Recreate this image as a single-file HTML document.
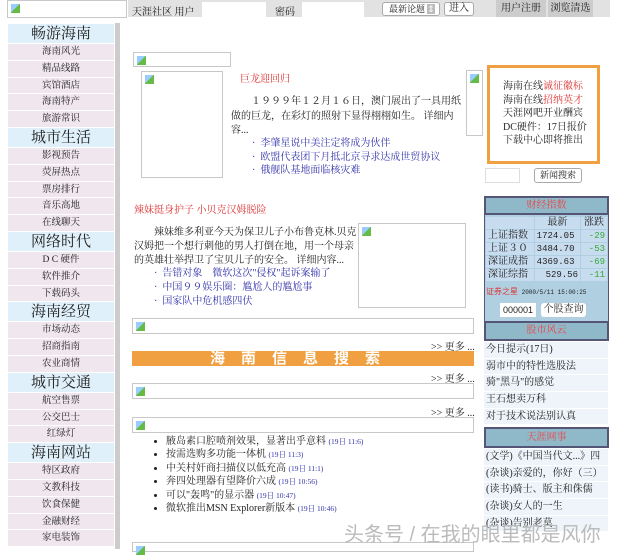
<!DOCTYPE html>
<html><head><meta charset="utf-8"><style>
*{margin:0;padding:0;box-sizing:border-box}
body{width:620px;height:549px;overflow:hidden;background:#fff;font-family:"Liberation Serif","Noto Serif CJK SC",serif;font-size:10px;color:#222;position:relative}
.a{position:absolute;white-space:nowrap}
.img{position:absolute;border:1px solid #c8c8c8;background:#fff}
.img:before{content:"";position:absolute;left:3px;top:3px;width:9px;height:9px;background:linear-gradient(135deg,#9cf 0 45%,#6b4 50%)}
.side{position:absolute;left:8px;top:24px;width:106px}
.side div{text-align:center;border-bottom:1px solid #fff}
.h{background:#dff0fa;font-size:15px;height:20px;line-height:20px}
.i{background:#efe6ee;font-size:9.5px;height:16.8px;line-height:16.8px}
.blue{color:#33a}
.red{color:#d33}
.rt div{height:16.7px;line-height:16.7px;background:#eef4fa;border-bottom:1px solid #fff;padding-left:2px;font-size:10px;white-space:nowrap;overflow:hidden}
.tb{border:2px solid #557;background:#8fb8c8;color:#e44;text-align:center;font-size:10px}
td{height:12px;line-height:12px;padding:0 2px;white-space:nowrap;background:#c8dcf0}
.m{font-family:'Liberation Mono',monospace;font-size:9px}
.g{color:#3a3;text-align:right}
</style></head><body>
<div class="img" style="left:7px;top:0;width:120px;height:18px"></div>
<div class="a" style="left:128px;top:0;width:482px;height:17px;background:#e2e2e2"></div>
<div class="a" style="left:132px;top:3px">天涯社区 用户</div>
<div class="a" style="left:202px;top:2px;width:64px;height:15px;background:#fff"></div>
<div class="a" style="left:275px;top:3px">密码</div>
<div class="a" style="left:302px;top:2px;width:62px;height:15px;background:#fff"></div>
<div class="a" style="left:382px;top:2px;width:58px;height:14px;background:#fff;border:1px solid #aaa;border-radius:3px;font-size:9px;padding-left:6px;line-height:12px">最新论题 <span style="background:#bbb;color:#fff">⇕</span></div>
<div class="a" style="left:444px;top:2px;width:30px;height:14px;background:#fff;border:1px solid #aaa;border-radius:3px;text-align:center;line-height:12px">进入</div>
<div class="a" style="left:496px;top:0;width:50px;height:17px;background:#ccc;text-align:center;line-height:17px">用户注册</div>
<div class="a" style="left:548px;top:0;width:45px;height:17px;background:#ccc;text-align:center;line-height:17px">浏览清选</div>
<div class="a" style="left:115px;top:23px;width:5px;height:526px;background:#ccc"></div>
<div class="side">
<div class="h">畅游海南</div><div class="i">海南风光</div><div class="i">精品线路</div><div class="i">宾馆酒店</div><div class="i">海南特产</div><div class="i">旅游常识</div>
<div class="h">城市生活</div><div class="i">影视预告</div><div class="i">荧屏热点</div><div class="i">票房排行</div><div class="i">音乐高地</div><div class="i">在线聊天</div>
<div class="h">网络时代</div><div class="i">D C 硬件</div><div class="i">软件推介</div><div class="i">下载码头</div>
<div class="h">海南经贸</div><div class="i">市场动态</div><div class="i">招商指南</div><div class="i">农业商情</div>
<div class="h">城市交通</div><div class="i">航空售票</div><div class="i">公交巴士</div><div class="i">红绿灯</div>
<div class="h">海南网站</div><div class="i">特区政府</div><div class="i">文教科技</div><div class="i">饮食保健</div><div class="i">金融财经</div><div class="i">家电装饰</div>
</div>
<div class="img" style="left:133px;top:52px;width:98px;height:15px"></div>
<div class="img" style="left:141px;top:71px;width:82px;height:107px"></div>
<div class="a red" style="left:240px;top:70px">巨龙迎回归</div>
<div class="a" style="left:231px;top:95px;width:236px;line-height:14.5px;white-space:normal">　　１９９９年１２月１６日，澳门展出了一具用纸做的巨龙，在彩灯的照射下显得栩栩如生。 详细内容...</div>
<div class="a blue" style="left:252px;top:137px;line-height:13.5px">·&nbsp; 李肇星说中美注定将成为伙伴<br>·&nbsp; 欧盟代表团下月抵北京寻求达成世贸协议<br>·&nbsp; 俄舰队基地面临核灾难</div>
<div class="img" style="left:466px;top:70px;width:17px;height:66px"></div>
<div class="a" style="left:487px;top:65px;width:113px;height:99px;border:3px solid #f0a040;padding:12px 0 0 13px;line-height:13.5px">海南在线<span class="red">诚征徽标</span><br>海南在线<span class="red">招纳英才</span><br>天涯网吧开业酬宾<br>DC硬件：17日报价<br>下载中心即将推出</div>
<div class="a" style="left:485px;top:168px;width:35px;height:15px;border:1px solid #ddd"></div>
<div class="a" style="left:534px;top:168px;width:48px;height:15px;border:1px solid #aaa;border-radius:3px;text-align:center;line-height:13px;font-size:9px">新闻搜索</div>
<div class="a red" style="left:134px;top:201px">辣妹挺身护子 小贝克汉姆脱险</div>
<div class="a" style="left:134px;top:226px;width:224px;line-height:13.8px;white-space:normal">　　辣妹维多利亚今天为保卫儿子小布鲁克林.贝克汉姆把一个想行刺他的男人打倒在地，用一个母亲的英雄壮举捍卫了宝贝儿子的安全。 详细内容...</div>
<div class="a blue" style="left:154px;top:267px;line-height:13.8px">·&nbsp; 告错对象　微软这次"侵权"起诉案输了<br>·&nbsp; 中国９９娱乐圈：尴尬人的尴尬事<br>·&nbsp; 国家队中危机感四伏</div>
<div class="img" style="left:358px;top:223px;width:108px;height:85px"></div>
<div class="img" style="left:132px;top:318px;width:342px;height:16px"></div>
<div class="a" style="left:431px;top:338px">&gt;&gt; 更多 ...</div>
<div class="a" style="left:132px;top:351px;width:342px;height:15px;background:#f0a040;color:#fff;font-size:15px;letter-spacing:16px;text-align:center;line-height:15px;font-family:'Liberation Sans','Noto Sans CJK SC',sans-serif;font-weight:bold">海南信息搜索</div>
<div class="a" style="left:431px;top:370px">&gt;&gt; 更多 ...</div>
<div class="img" style="left:132px;top:383px;width:342px;height:16px"></div>
<div class="a" style="left:431px;top:404px">&gt;&gt; 更多 ...</div>
<div class="img" style="left:132px;top:417px;width:342px;height:16px"></div>
<ul class="a" style="left:166px;top:435px;line-height:13.4px;list-style:disc">
<li>腋岛素口腔喷剂效果，显著出乎意料 <span class="blue" style="font-size:7.5px">(19日 11:6)</span></li>
<li>按需选购多功能一体机 <span class="blue" style="font-size:7.5px">(19日 11:3)</span></li>
<li>中关村奸商扫描仪以低充高 <span class="blue" style="font-size:7.5px">(19日 11:1)</span></li>
<li>奔四处理器有望降价六成 <span class="blue" style="font-size:7.5px">(19日 10:56)</span></li>
<li>可以"轰鸣"的显示器 <span class="blue" style="font-size:7.5px">(19日 10:47)</span></li>
<li>微软推出MSN Explorer新版本 <span class="blue" style="font-size:7.5px">(19日 10:46)</span></li>
</ul>
<div class="img" style="left:132px;top:542px;width:342px;height:10px"></div>
<div class="a" style="left:484px;top:196px;width:125px;height:145px;background:#b0d0e2;border:1px solid #557"></div>
<div class="a tb" style="left:484px;top:196px;width:125px;height:19px;line-height:15px">财经指数</div>
<table class="a" style="left:485px;top:216px;width:123px;border-collapse:separate;border-spacing:1px;font-size:10px">
<tr><td></td><td style="text-align:center">最新</td><td style="text-align:center">涨跌</td></tr>
<tr><td>上证指数</td><td class="m">1724.05</td><td class="m g">-29</td></tr>
<tr><td>上证３０</td><td class="m">3484.70</td><td class="m g">-53</td></tr>
<tr><td>深证成指</td><td class="m">4369.63</td><td class="m g">-69</td></tr>
<tr><td>深证综指</td><td class="m" style="text-align:right">529.56</td><td class="m g">-11</td></tr>
</table>
<div class="a" style="left:486px;top:286px;font-size:6px;font-family:'Liberation Mono',monospace"><span style="color:#d33;font-size:8px">证券之星</span> 2000/5/11 15:00:25</div>
<div class="a" style="left:500px;top:303px;width:36px;height:14px;background:#fff;font-size:9px;line-height:14px;text-align:center;font-family:'Liberation Sans',sans-serif">000001</div>
<div class="a" style="left:541px;top:303px;width:45px;height:14px;background:#fff;border-radius:3px;line-height:14px;text-align:center">个股查询</div>
<div class="a tb" style="left:484px;top:321px;width:125px;height:20px;line-height:16px">股市风云</div>
<div class="a rt" style="left:484px;top:342px;width:124px">
<div>今日提示(17日)</div><div>弱市中的特性选股法</div><div>骑"黑马"的感觉</div><div>王石想卖万科</div><div>对于技术说法别认真</div></div>
<div class="a tb" style="left:484px;top:427px;width:125px;height:21px;line-height:17px">天涯网事</div>
<div class="a rt" style="left:484px;top:449px;width:124px">
<div>(文学)《中国当代文...》四</div><div>(杂谈)亲爱的，你好（三）</div><div>(读书)骑士、版主和侏儒</div><div>(杂谈)女人的一生</div><div>(杂谈)告别老莫</div></div>
<div class="a" style="left:344px;top:518px;font-size:20px;color:#bbb;font-family:'Liberation Sans','Noto Sans CJK SC',sans-serif">头条号 / 在我的眼里都是风你</div>
</body></html>
